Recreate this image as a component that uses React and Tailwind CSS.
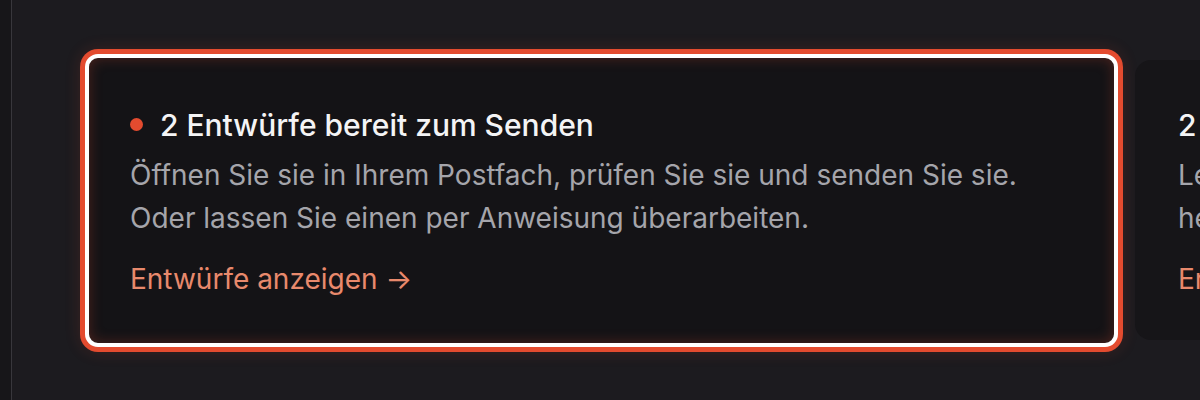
export default function App() {
  const cards = [
    {
      title: '2 Entwürfe bereit zum Senden',
      lines: [
        'Öffnen Sie sie in Ihrem Postfach, prüfen Sie sie und senden Sie sie.',
        'Oder lassen Sie einen per Anweisung überarbeiten.',
      ],
      link: 'Entwürfe anzeigen →',
      active: true,
    },
    {
      title: '2 Antworten warten auf Sie',
      lines: [
        'Lesen Sie die neuen Antworten Ihrer Kontakte und entscheiden Sie,',
        'heute noch, wie es weitergehen soll.',
      ],
      link: 'Erinnerungen ansehen →',
      active: false,
    },
  ];

  return (
    <div className="flex h-[400px] w-[1200px] overflow-hidden bg-[#1c1b1f] font-['Inter',sans-serif]">
      <div className="h-full w-[12px] shrink-0 border-r border-[#38373c] bg-[#171619]" />
      <div className="flex flex-1 items-center gap-[17px] pl-[73px]">
        {cards.map((card, i) =>
          card.active ? (
            <div
              key={i}
              className="w-[1033px] shrink-0 rounded-[13px] border-4 border-white bg-[#141316] pb-[46px] pl-[41px] pr-[30px] pt-[49px] shadow-[0_0_0_5px_#e34b2f,0_0_16px_5px_rgba(227,75,47,0.16),inset_0_0_14px_rgba(227,75,47,0.28)]"
            >
              <CardContent card={card} />
            </div>
          ) : (
            <div
              key={i}
              className="w-[1034px] shrink-0 rounded-[16px] bg-[#161518] pb-[43px] pl-[43px] pr-[30px] pt-[47px]"
            >
              <CardContent card={card} />
            </div>
          )
        )}
      </div>
    </div>
  );
}

function CardContent({ card }) {
  return (
    <div>
      <div className="flex items-center gap-[17px]">
        {card.active && (
          <span className="h-[13px] w-[13px] shrink-0 rounded-full bg-[#e34b2f]" />
        )}
        <h3 className="whitespace-nowrap text-[30px] font-medium leading-[36px] text-[#f4f4f5]">
          {card.title}
        </h3>
      </div>
      <p className="mt-[11px] whitespace-nowrap text-[28px] leading-[43px] text-[#a5a5ab]">
        {card.lines[0]}
        <br />
        {card.lines[1]}
      </p>
      <a className="mt-[21px] block whitespace-nowrap text-[28px] leading-[36px] text-[#e8896c]">
        {card.link}
      </a>
    </div>
  );
}
